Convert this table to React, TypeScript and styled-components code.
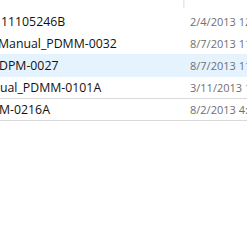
import styled, { createGlobalStyle } from 'styled-components';

interface FileRow {
    name: string;
    modified: string;
    shift: number;
}

const files: FileRow[] = [
    { name: '11105246B', modified: '2/4/2013 12:41 PM', shift: 1 },
    { name: 'Manual_PDMM-0032', modified: '8/7/2013 11:02 AM', shift: -2 },
    { name: 'DPM-0027', modified: '8/7/2013 11:04 AM', shift: -1 },
    { name: 'ual_PDMM-0101A', modified: '3/11/2013 10:15 AM', shift: 0 },
    { name: 'M-0216A', modified: '8/2/2013 4:48 PM', shift: -1 },
];

const HOVER_ROW = 2;
const FOCUS_ROW = 4;

const GlobalStyle = createGlobalStyle`
    html, body {
        margin: 0;
        padding: 0;
        background: #ffffff;
        overflow: hidden;
    }
    body {
        width: 247px;
        height: 251px;
        font-family: 'Open Sans', 'Noto Sans', 'Liberation Sans', sans-serif;
    }
`;

const App = () => {
    return (
        <>
            <GlobalStyle />
            <List>
                <HeaderStrip>
                    <HeaderCell />
                    <HeaderCell $last />
                </HeaderStrip>
                {files.map((file, index) => (
                    <Row
                        key={file.name}
                        $hover={index === HOVER_ROW}
                        $focus={index === FOCUS_ROW}
                    >
                        <NameCell style={{ marginLeft: file.shift }}>
                            {file.name}
                        </NameCell>
                        <DateCell>{file.modified}</DateCell>
                    </Row>
                ))}
            </List>
        </>
    );
};

const List = styled.div`
    width: 247px;
    display: flex;
    flex-direction: column;
    overflow: hidden;
`;

const HeaderStrip = styled.div`
    display: grid;
    grid-template-columns: 184px 1fr;
    height: 8px;
    margin-bottom: 3px;
`;

const HeaderCell = styled.div<{ $last?: boolean }>`
    border-right: ${(props) => (props.$last ? 'none' : '1px solid #e8e8e8')};
    border-left: ${(props) => (props.$last ? '1px solid #f2f2f2' : 'none')};
    box-sizing: border-box;
`;

const Row = styled.div<{ $hover: boolean; $focus: boolean }>`
    display: grid;
    grid-template-columns: 190px 1fr;
    align-items: center;
    height: 23px;
    box-sizing: border-box;
    white-space: nowrap;
    font-size: 12px;
    background: ${(props) => (props.$hover ? '#e5f3ff' : 'transparent')};
    border-top: 1px solid
        ${(props) => (props.$focus ? '#d9d9d9' : 'transparent')};
    border-bottom: 1px solid
        ${(props) => (props.$focus ? '#d9d9d9' : 'transparent')};
    margin-top: -1px;
`;

const NameCell = styled.div`
    color: #111111;
    overflow: hidden;
    font-size: 12.3px;
`;

const DateCell = styled.div`
    color: #707070;
    overflow: hidden;
    font-size: 11px;
`;

export default App;
